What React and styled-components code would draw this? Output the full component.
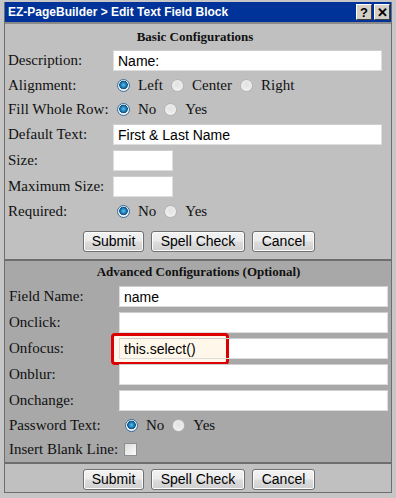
import React from 'react'
import styled, { createGlobalStyle } from 'styled-components'

const Global = createGlobalStyle`
  html, body { margin: 0; padding: 0; background: #c6c6c6; }
  body { width: 396px; height: 498px; overflow: hidden; }
`

const Window = styled.div`
  margin: 2px 4px 0 4px;
  width: 388px;
  border: 1px solid #6e6e6e;
  border-top: none;
  background: #c0c0c0;
  box-sizing: border-box;
`

const TitleBar = styled.div`
  display: flex;
  align-items: center;
  height: 20px;
  background: #003399;
  color: #fff;
  font-family: "Liberation Sans", Arial, sans-serif;
  font-weight: bold;
  font-size: 12px;
  padding: 0 1px 0 3px;
  border-bottom: 2px solid #8a8a8a;
`

const TitleText = styled.div`
  flex: 1;
`

const TitleButton = styled.div`
  box-sizing: border-box;
  width: 16px;
  height: 16px;
  margin-left: 2px;
  background: #d4d0c8;
  border: 1px solid;
  border-color: #fff #404040 #404040 #fff;
  color: #000;
  font-size: 13px;
  font-weight: bold;
  display: flex;
  align-items: center;
  justify-content: center;
  line-height: 1;
`

const Section = styled.div`
  background: ${p => p.$bg};
  border-top: ${p => (p.$divider ? '2px solid #6e6e6e' : 'none')};
  padding: ${p => p.$pad};
`

const Heading = styled.div`
  text-align: center;
  font-family: "Liberation Serif", "Times New Roman", serif;
  font-weight: bold;
  font-size: 13px;
  color: #111;
  height: 20px;
  line-height: 20px;
  margin-bottom: ${p => p.$after}px;
`

const Form = styled.div`
  display: grid;
  grid-template-columns: ${p => p.$labelWidth}px 1fr;
  row-gap: 5px;
  align-items: center;
`

const Label = styled.div`
  font-family: "Liberation Serif", "Times New Roman", serif;
  font-size: 15px;
  color: #111;
  line-height: 19px;
  white-space: nowrap;
`

const TextInput = styled.input`
  box-sizing: border-box;
  display: block;
  width: ${p => p.$w || '100%'};
  height: 21px;
  border: 1px solid #dedede;
  border-top-color: #cdcdcd;
  background: ${p => (p.$clear ? 'transparent' : '#fff')};
  font-family: "Liberation Sans", Arial, sans-serif;
  font-size: 14px;
  padding: 0 4px;
  color: #000;
  outline: none;
  position: relative;
  z-index: 1;
`

const FieldBox = styled.div`
  position: relative;
  background: #fff;
`

const Highlight = styled.div`
  position: absolute;
  left: -8px;
  top: -5px;
  width: 118px;
  height: 32px;
  box-sizing: border-box;
  border: 3px solid #dd0000;
  border-radius: 4px;
  background: #fff7ea;
`

const RadioRow = styled.div`
  display: flex;
  align-items: center;
  padding-left: ${p => p.$indent}px;
  font-family: "Liberation Serif", "Times New Roman", serif;
  font-size: 15px;
  color: #111;
  height: 19px;
`

const Radio = styled.span`
  width: 11px;
  height: 11px;
  border-radius: 50%;
  border: 1px solid ${p => (p.$on ? '#3d6f99' : '#b4b4b4')};
  background: ${p =>
    p.$on
      ? 'radial-gradient(circle at 50% 45%, #5fc3ee 0, #1b7fbf 2.5px, #14527f 4px, #e8eef3 4.6px, #f6f6f6 100%)'
      : 'radial-gradient(circle at 50% 40%, #e2e2e2 0, #e8e8e8 3px, #f7f7f7 100%)'};
  margin-right: 8px;
  flex: none;
`

const Option = styled.span`
  margin-right: 8px;
`

const Checkbox = styled.span`
  width: 11px;
  height: 11px;
  border: 1px solid #8e8f8f;
  background: linear-gradient(135deg, #dcdcdc, #fbfbfb);
  margin-left: 5px;
`

const ButtonRow = styled.div`
  display: flex;
  gap: 7px;
  padding-left: 75px;
`

const Button = styled.button`
  box-sizing: border-box;
  width: ${p => p.$w}px;
  height: 21px;
  padding: 0;
  border: 1px solid #707070;
  border-radius: 3px;
  background: linear-gradient(#f2f2f2 0%, #ebebeb 49%, #dddddd 51%, #cfcfcf 100%);
  font-family: "Liberation Sans", Arial, sans-serif;
  font-size: 14px;
  line-height: 19px;
  color: #000;
  box-shadow: inset 0 0 0 1px #fcfcfc;
`

const Radios = ({ options, selected, indent }) => (
  <RadioRow $indent={indent}>
    {options.map(o => (
      <React.Fragment key={o}>
        <Radio $on={o === selected} />
        <Option>{o}</Option>
      </React.Fragment>
    ))}
  </RadioRow>
)

const Buttons = () => (
  <ButtonRow>
    <Button $w={61}>Submit</Button>
    <Button $w={94}>Spell Check</Button>
    <Button $w={63}>Cancel</Button>
  </ButtonRow>
)

export default function App() {
  return (
    <>
      <Global />
      <Window>
        <TitleBar>
          <TitleText>EZ-PageBuilder &gt; Edit Text Field Block</TitleText>
          <TitleButton>?</TitleButton>
          <TitleButton>✕</TitleButton>
        </TitleBar>

        <Section $bg="#c0c0c0" $pad="3px 9px 7px 3px">
          <Heading $after={3}>Basic Configurations</Heading>
          <Form $labelWidth={105}>
            <Label>Description:</Label>
            <TextInput defaultValue="Name:" />
            <Label>Alignment:</Label>
            <Radios options={['Left', 'Center', 'Right']} selected="Left" indent={4} />
            <Label>Fill Whole Row:</Label>
            <Radios options={['No', 'Yes']} selected="No" indent={4} />
            <Label>Default Text:</Label>
            <TextInput defaultValue="First & Last Name" />
            <Label>Size:</Label>
            <TextInput $w="60px" />
            <Label>Maximum Size:</Label>
            <TextInput $w="60px" />
            <Label>Required:</Label>
            <Radios options={['No', 'Yes']} selected="No" indent={4} />
          </Form>
          <div style={{ height: 10 }} />
          <Buttons />
        </Section>

        <Section $bg="#a8a8a8" $divider $pad="1px 3px 3px 4px">
          <Heading $after={4}>Advanced Configurations (Optional)</Heading>
          <Form $labelWidth={110}>
            <Label>Field Name:</Label>
            <TextInput defaultValue="name" />
            <Label>Onclick:</Label>
            <TextInput />
            <Label>Onfocus:</Label>
            <FieldBox>
              <Highlight />
              <TextInput $clear defaultValue="this.select()" />
            </FieldBox>
            <Label>Onblur:</Label>
            <TextInput />
            <Label>Onchange:</Label>
            <TextInput />
            <Label>Password Text:</Label>
            <Radios options={['No', 'Yes']} selected="No" indent={6} />
            <Label>Insert Blank Line:</Label>
            <RadioRow $indent={0}>
              <Checkbox />
            </RadioRow>
          </Form>
        </Section>

        <Section $bg="#c0c0c0" $divider $pad="5px 3px 2px 3px">
          <Buttons />
        </Section>
      </Window>
    </>
  )
}
